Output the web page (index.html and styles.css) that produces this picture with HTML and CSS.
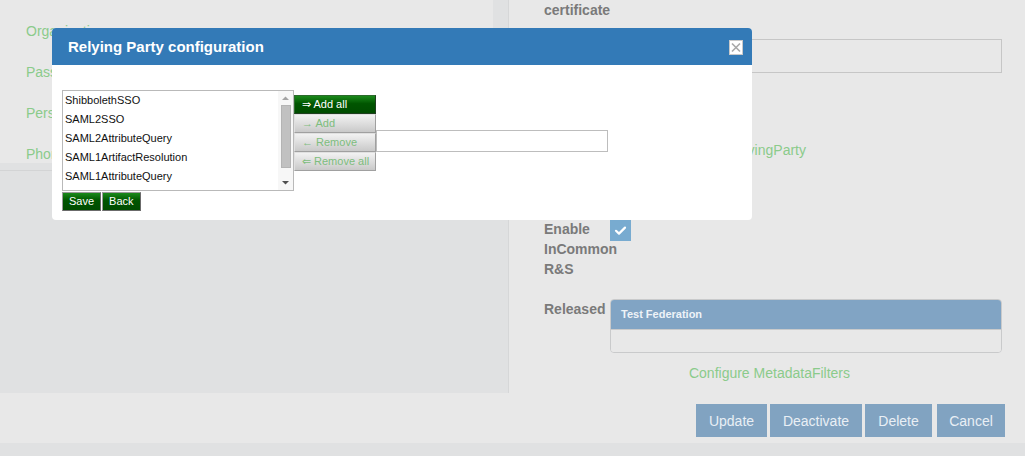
FILE: index.html
```html
<!DOCTYPE html>
<html>
<head>
<meta charset="utf-8">
<link rel="stylesheet" href="styles.css">
</head>
<body>
<div class="page">
  <div class="main">
    <div class="left">
      <div class="left-top">
        <a class="glink">Organization name</a>
        <a class="glink">Password</a>
        <a class="glink">Persistent ID</a>
        <a class="glink">Phone number</a>
      </div>
      <div class="left-line"></div>
    </div>
    <div class="gap"></div>
    <div class="right">
      <div class="label first">certificate</div>
      <div class="field-box"></div>
      <div class="center-link rp">Configure RelyingParty</div>
      <div class="frow enable-row">
        <div class="flabel">Enable InCommon R&amp;S</div>
        <div class="check">
          <svg width="21" height="21" viewBox="0 0 21 21"><path d="M6 10.8 L9 13.6 L15 7.6" fill="none" stroke="#ffffff" stroke-width="2.2" stroke-linecap="round" stroke-linejoin="round"/></svg>
        </div>
      </div>
      <div class="frow released-row">
        <div class="flabel">Released</div>
        <div class="fed-panel">
          <div class="fed-head">Test Federation</div>
          <div class="fed-body"></div>
        </div>
      </div>
      <div class="center-link meta">Configure MetadataFilters</div>
    </div>
  </div>
  <div class="footer">
    <button class="fbtn w-update">Update</button>
    <button class="fbtn w-deact">Deactivate</button>
    <button class="fbtn w-delete">Delete</button>
    <button class="fbtn w-cancel">Cancel</button>
  </div>
  <div class="bottom-strip"></div>
</div>

<div class="modal">
  <div class="modal-head">
    <span class="modal-title">Relying Party configuration</span>
    <span class="close">
      <svg width="14" height="15" viewBox="0 0 14 15"><rect x="0.5" y="0.5" width="13" height="14" fill="#ffffff" stroke="#c9c9c9"/><path d="M3 3.5 L11 11.5 M11 3.5 L3 11.5" stroke="#a8a8a8" stroke-width="1.6"/></svg>
    </span>
  </div>
  <div class="modal-body">
    <div class="picker">
      <div class="listbox">
        <div class="items">
          <div class="item">ShibbolethSSO</div>
          <div class="item">SAML2SSO</div>
          <div class="item">SAML2AttributeQuery</div>
          <div class="item">SAML1ArtifactResolution</div>
          <div class="item">SAML1AttributeQuery</div>
        </div>
        <div class="scrollbar">
          <svg class="arr" width="15" height="8" viewBox="0 0 15 8"><path d="M4 6 L11 6 L7.5 2.5 Z" fill="#a3a3a3"/></svg>
          <div class="thumb"></div>
          <div class="track-fill"></div>
          <svg class="arr" width="15" height="8" viewBox="0 0 15 8"><path d="M4 2 L11 2 L7.5 5.5 Z" fill="#505050"/></svg>
        </div>
      </div>
      <div class="pbtns">
        <div class="pbtn on">⇒ Add all</div>
        <div class="pbtn">→ Add</div>
        <div class="pbtn">← Remove</div>
        <div class="pbtn">⇐ Remove all</div>
      </div>
      <div class="target"></div>
    </div>
    <div class="actions">
      <div class="gbtn">Save</div>
      <div class="gbtn">Back</div>
    </div>
  </div>
</div>
</body>
</html>
```
FILE: styles.css
```css
html, body {
  margin: 0;
  padding: 0;
}
body {
  background: #e0e1e2;
  font-family: "Liberation Sans", Arial, sans-serif;
  width: 1025px;
  height: 456px;
  overflow: hidden;
  position: relative;
}
.page {
  display: flex;
  flex-direction: column;
}
.main {
  display: flex;
  height: 393px;
}
.left {
  width: 493px;
  display: flex;
  flex-direction: column;
}
.left-top {
  height: 163px;
  background: #e8e8e8;
  display: flex;
  flex-direction: column;
  padding: 21px 0 0 26px;
  box-sizing: border-box;
  gap: 21px;
}
.glink {
  color: #8bcb8b;
  font-size: 14px;
  line-height: 20px;
  white-space: nowrap;
}
.left-line {
  margin-top: 7px;
  height: 1px;
  background: #d3d4d5;
}
.gap {
  width: 15px;
  background: #e0e1e2;
  border-right: 1px solid #d6d7d8;
}
.right {
  flex: 1;
  background: #e8e8e8;
  padding: 0 23px 0 35px;
  display: flex;
  flex-direction: column;
}
.label {
  color: #7a7a7a;
  font-weight: bold;
  font-size: 14px;
  line-height: 20px;
}
.field-box {
  margin: 19px 0 0 66px;
  height: 34px;
  border: 1px solid #c6c6c6;
  box-sizing: border-box;
}
.center-link {
  color: #8bcb8b;
  font-size: 14px;
  line-height: 20px;
  text-align: center;
  padding-right: 7px;
  margin-top: 67px;
}
.center-link.rp {
  padding-right: 78px;
}
.frow {
  display: flex;
  align-items: flex-start;
}
.enable-row {
  margin-top: 59px;
}
.flabel {
  width: 66px;
  flex: none;
  color: #7a7a7a;
  font-weight: bold;
  font-size: 14px;
  line-height: 20px;
}
.check {
  width: 21px;
  height: 21px;
  margin-top: 1px;
  background: #78abd0;
}
.check svg {
  display: block;
}
.released-row {
  margin-top: 20px;
}
.fed-panel {
  flex: 1;
  border: 1px solid #c9cacb;
  border-radius: 4px;
  overflow: hidden;
}
.fed-head {
  height: 29px;
  background: #81a4c4;
  color: #eef3f8;
  font-weight: bold;
  font-size: 11px;
  line-height: 29px;
  padding-left: 10px;
}
.fed-body {
  height: 22px;
  background: #e8e8e8;
  border-top: 1px solid #c9cacb;
}
.center-link.meta {
  margin-top: 10px;
}
.footer {
  height: 50px;
  background: #e8e8e8;
  display: flex;
  justify-content: flex-end;
  align-items: flex-start;
  padding: 11px 20px 0 0;
  box-sizing: border-box;
  gap: 3px;
}
.fbtn {
  height: 33px;
  padding: 0;
  border: none;
  background: #81a3c1;
  color: #e9eff5;
  font-family: "Liberation Sans", Arial, sans-serif;
  font-size: 14px;
  margin: 0;
  text-align: center;
}
.w-update { width: 71px; }
.w-deact { width: 92px; }
.w-delete { width: 67px; }
.w-cancel { width: 68px; margin-left: 2px; }
.bottom-strip {
  height: 13px;
  background: #e0e1e2;
}

/* modal */
.modal {
  position: absolute;
  left: 52px;
  top: 28px;
  width: 700px;
  height: 192px;
  background: #ffffff;
  border-radius: 4px;
  overflow: hidden;
}
.modal-head {
  height: 37px;
  background: #337ab7;
  display: flex;
  align-items: center;
  justify-content: space-between;
  padding: 0 9px 0 16px;
}
.modal-title {
  color: #ffffff;
  font-weight: bold;
  font-size: 15px;
}
.close {
  display: flex;
  margin-top: 1px;
}
.close svg {
  display: block;
}
.modal-body {
  padding: 25px 0 0 10px;
}
.picker {
  display: flex;
  align-items: flex-start;
}
.listbox {
  width: 232px;
  height: 101px;
  border: 1px solid #b9b9b9;
  box-sizing: border-box;
  display: flex;
}
.items {
  flex: 1;
  padding: 0 0 0 2px;
}
.item {
  font-size: 11px;
  line-height: 19px;
  color: #111;
  white-space: nowrap;
}
.scrollbar {
  width: 15px;
  background: #f7f7f7;
  display: flex;
  flex-direction: column;
  align-items: center;
}
.arr {
  display: block;
  flex: none;
}
.scrollbar .arr:first-child {
  margin-top: 3px;
}
.thumb {
  width: 10px;
  height: 63px;
  margin-top: 3px;
  background: #c1c1c1;
  border: 1px solid #b4b4b4;
  box-sizing: border-box;
}
.track-fill {
  flex: 1;
}
.scrollbar .arr:last-child {
  margin-bottom: 3px;
}
.pbtns {
  margin-top: 5px;
  width: 82px;
  display: flex;
  flex-direction: column;
}
.pbtn {
  height: 19px;
  box-sizing: border-box;
  font-size: 11px;
  line-height: 17px;
  padding-left: 7px;
  color: #7dbd7d;
  background: linear-gradient(#f2f2f2, #c9c9c9);
  border: 1px solid #a0a0a0;
  border-top-color: #e0e0e0;
  border-left-color: #e0e0e0;
  white-space: nowrap;
}
.pbtn.on {
  color: #ffffff;
  background: linear-gradient(#1b8a1b, #005500 45%, #004c00);
  border-color: #2d6b2d #1f3f1f #1f3f1f #2d6b2d;
}
.target {
  margin-top: 40px;
  width: 232px;
  height: 22px;
  border: 1px solid #bdbdbd;
  box-sizing: border-box;
}
.actions {
  display: flex;
  gap: 1px;
  margin-top: 1px;
}
.gbtn {
  height: 19px;
  box-sizing: border-box;
  font-size: 11px;
  line-height: 17px;
  color: #ffffff;
  padding: 0 6px;
  background: linear-gradient(#1b8a1b, #005500 45%, #004c00);
  border: 1px solid #6b6b6b;
  border-top-color: #9a9a9a;
  border-left-color: #9a9a9a;
}
```
